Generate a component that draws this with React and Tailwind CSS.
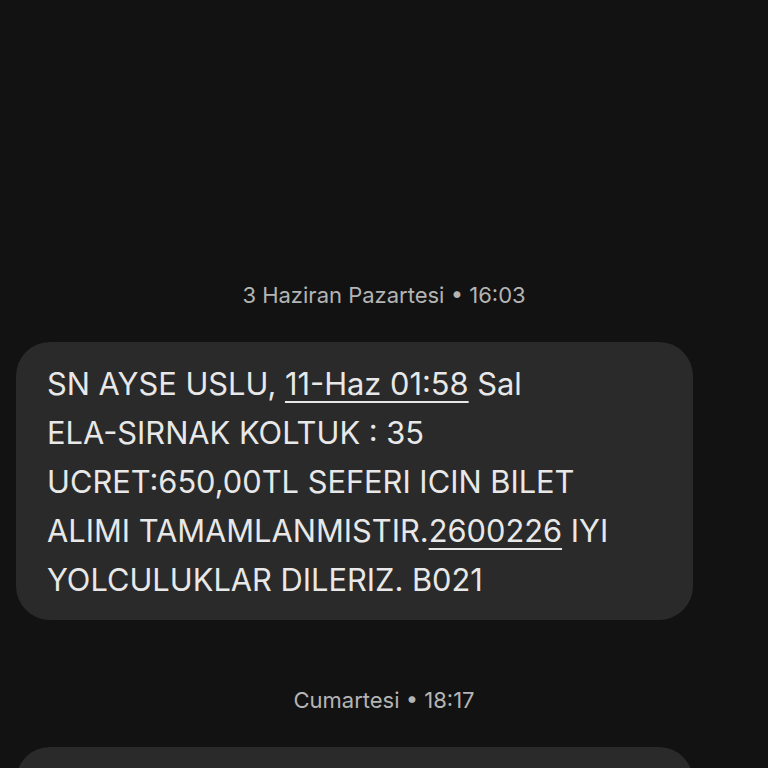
export default function App() {
  return (
    <div className="min-h-[768px] h-[768px] overflow-hidden bg-[#121212] font-['Inter',sans-serif]">
      <div className="flex flex-col pt-[281px] px-4">
        <p className="text-center text-[22px] leading-[28px] text-[#b4b4b4]">
          3 Haziran Pazartesi • 16:03
        </p>

        <div className="mt-[33px] w-[677px] rounded-[34px] bg-[#2a2a2a] pt-[17px] pb-[16px] pl-[31px] pr-4 text-[30.8px] leading-[49px] text-[#e8e8e8]">
          SN AYSE USLU,{' '}
          <span className="underline decoration-2 underline-offset-[6px]">11-Haz 01:58</span> Sal
          <br />
          ELA-SIRNAK KOLTUK : 35
          <br />
          UCRET:650,00TL SEFERI ICIN BILET
          <br />
          ALIMI TAMAMLANMISTIR.
          <span className="underline decoration-2 underline-offset-[6px]">2600226</span> IYI
          <br />
          YOLCULUKLAR DILERIZ. B021
        </div>

        <p className="mt-[66px] text-center text-[22px] leading-[28px] text-[#b4b4b4]">
          Cumartesi • 18:17
        </p>

        <div className="mt-[33px] h-[120px] w-[677px] rounded-[34px] bg-[#2a2a2a]" />
      </div>
    </div>
  );
}
